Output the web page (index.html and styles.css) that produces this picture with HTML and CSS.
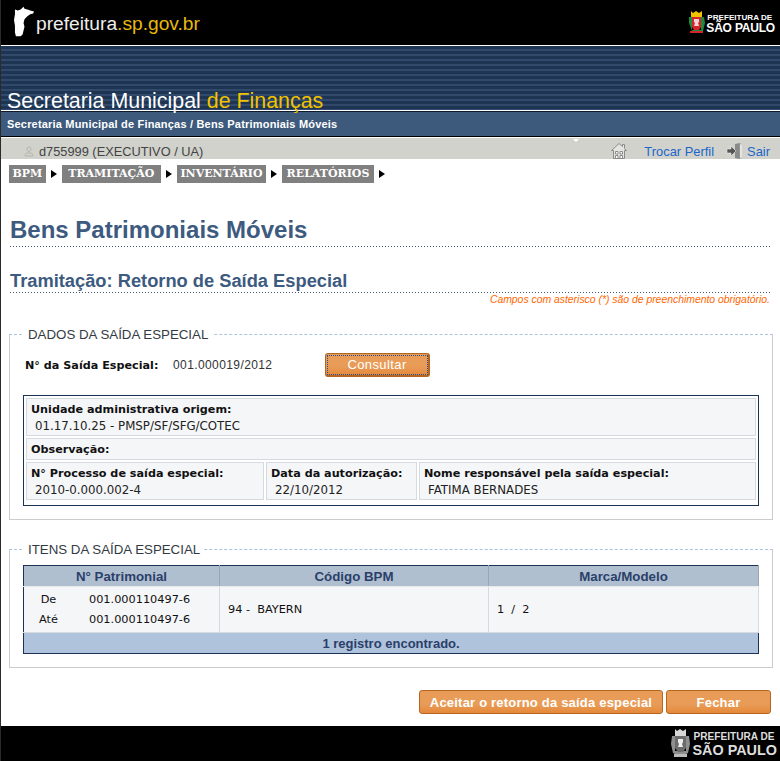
FILE: index.html
```html
<!DOCTYPE html>
<html lang="pt-BR">
<head>
  <meta charset="UTF-8" />
  <title>Bens Patrimoniais Móveis</title>
  <link rel="stylesheet" href="styles.css">
</head>
<body>
  <!-- Top bar -->
  <div class="topbar">
    <div class="portal">
      <svg class="state-map" viewBox="0 0 22 32"><path fill="#fff" d="M1 3l3 1 3-1 3-3 1 2 3 1 3 1 4 1-1 2-3 1-3 2-3 3-1 4 1 4-1 4-1 4-2 2-5 0-1-4 0-7-1-6 1-6z"/></svg>
      <span class="portal-name">prefeitura<em>.sp.gov.br</em></span>
    </div>
    <div class="city-logo">
      <svg class="crest" viewBox="0 0 17 23">
        <path fill="#f2c200" d="M3 0l2 2 3-2 3 2 3-2 0 6-11 0z"/>
        <path fill="#1c8a3c" d="M1 6l3 0 0 13 9 0 0-13 3 0 1 6-2 8-3 2-5 0-3-2-3-8z"/>
        <path fill="#d8232a" d="M4 6l9 0 0 10-2 3-5 0-2-3z"/>
        <path fill="#f4d6d6" d="M6 8l5 0 0 3-1 1 1 3-5 0 1-3-1-1z"/>
        <path fill="#d8232a" d="M2 20l13 0 0 2-13 0z"/>
      </svg>
      <div class="city-name"><span>PREFEITURA DE</span><strong>SÃO PAULO</strong></div>
    </div>
  </div>

  <div class="banner"><h2>Secretaria Municipal <span>de Finanças</span></h2></div>
  <div class="crumbs">Secretaria Municipal de Finanças / Bens Patrimoniais Móveis</div>

  <div class="userbar">
    <div class="user">
      <svg class="user-icon" viewBox="0 0 10 11"><path fill="none" stroke="#b5b5b0" d="M5 1c1.500 0 2 1 2 2s-.5 2.500-2 2.500S3 4 3 3s.5-2 2-2zM1 10c0-2 1.500-3 2.500-3h3C7.500 7 9 8 9 10z"/></svg>
      d755999 (EXECUTIVO / UA)
    </div>
    <div class="user-links">
      <svg class="home-icon" viewBox="0 0 16 16"><path fill="#e4e4e0" stroke="#8b8b8b" d="M2.500 15.500v-8l-2 0L8 .5l3.500 3V1.500h2v4l2 2h-2v8z"/><path fill="#fff" stroke="#8b8b8b" d="M4.500 8.500h2.500v2.500H4.500zM9 8.500h2.500v2.500H9zM4.500 12.500h2.500v3H4.500zM9 12.500h2.500v3H9z"/></svg>
      <a href="#" class="link-perfil">Trocar Perfil</a>
      <svg class="exit-icon" viewBox="0 0 16 16"><path fill="#8a8a8a" d="M9 1l5-1v16l-5-1z"/><path fill="#fff" stroke="#aaa" stroke-width=".6" d="M14 1h2v14h-2z"/><path fill="#555" stroke="#fff" stroke-width=".5" d="M1 6h4V3l5 5-5 5v-3H1z"/></svg>
      <a href="#">Sair</a>
    </div>
  </div>

  <nav class="menu">
    <a href="#" class="menu-tight">BPM</a><i></i>
    <a href="#" class="menu-wide">TRAMITAÇÃO</a><i></i>
    <a href="#" class="menu-tight">INVENTÁRIO</a><i></i>
    <a href="#">RELATÓRIOS</a><i></i>
  </nav>

  <div class="content">
    <h1 class="page-title">Bens Patrimoniais Móveis</h1>
    <h3 class="sub-title">Tramitação: Retorno de Saída Especial</h3>
    <p class="required-note">Campos com asterisco (*) são de preenchimento obrigatório.</p>

    <fieldset class="box box-dados">
      <legend>DADOS DA SAÍDA ESPECIAL</legend>
      <div class="search-row">
        <label>N° da Saída Especial:</label>
        <span class="search-value">001.000019/2012</span>
        <button class="btn btn-consultar">Consultar</button>
      </div>
      <div class="info-panel">
        <div class="info-cell span-all">
          <b>Unidade administrativa origem:</b>
          <span>01.17.10.25 - PMSP/SF/SFG/COTEC</span>
        </div>
        <div class="info-cell span-all"><b>Observação:</b></div>
        <div class="info-cell">
          <b>N° Processo de saída especial:</b>
          <span>2010-0.000.002-4</span>
        </div>
        <div class="info-cell">
          <b>Data da autorização:</b>
          <span>22/10/2012</span>
        </div>
        <div class="info-cell">
          <b>Nome responsável pela saída especial:</b>
          <span>FATIMA BERNADES</span>
        </div>
      </div>
    </fieldset>

    <fieldset class="box box-itens">
      <legend>ITENS DA SAÍDA ESPECIAL</legend>
      <table class="grid">
        <thead>
          <tr>
            <th class="col-patr">N° Patrimonial</th>
            <th class="col-bpm">Código BPM</th>
            <th>Marca/Modelo</th>
          </tr>
        </thead>
        <tbody>
          <tr>
            <td>
              <div class="range"><span>De</span><span>001.000110497-6</span></div>
              <div class="range"><span>Até</span><span>001.000110497-6</span></div>
            </td>
            <td>94 -&nbsp; BAYERN</td>
            <td>1 &nbsp;/&nbsp; 2</td>
          </tr>
        </tbody>
        <tfoot>
          <tr><td colspan="3">1 registro encontrado.</td></tr>
        </tfoot>
      </table>
    </fieldset>

    <div class="actions">
      <button class="btn btn-aceitar">Aceitar o retorno da saída especial</button>
      <button class="btn btn-fechar">Fechar</button>
    </div>
  </div>

  <div class="footer">
    <svg class="crest-foot" viewBox="0 0 19 28">
      <path fill="#d8d8d8" d="M4 0l2 2 3-2 3 2 3-2 0 7-11 0z"/>
      <path fill="#8f8f8f" d="M1 7l3 0 0 15 11 0 0-15 3 0 1 8-2 9-4 2-7 0-4-2-2-9z"/>
      <path fill="#6c6c6c" d="M4 7l11 0 0 12-3 4-5 0-3-4z"/>
      <path fill="#eee" d="M7 10l5 0 0 3-1 2 1 3-5 0 1-3-1-2z"/>
      <path fill="#bbb" d="M3 25l13 0 0 3-13 0z"/>
    </svg>
    <div class="foot-name"><span>PREFEITURA DE</span><strong>SÃO PAULO</strong></div>
  </div>
</body>
</html>
```

FILE: styles.css
```css
body {
  margin: 0;
  background: #fff;
  color: #111;
  font-family: "Liberation Sans", Arial, sans-serif;
  border-left: 1px solid #2b2b2b;
}

/* header */
.topbar {
  height: 45px;
  margin-left: -1px;
  background: #000;
  display: flex;
  justify-content: space-between;
  align-items: flex-start;
}

.portal {
  display: flex;
  padding: 6px 0 0 14px;
}

.state-map {
  width: 21px;
  height: 32px;
}

.portal-name {
  margin: 6px 0 0 1px;
  color: #eee;
  font-size: 19.200px;
  line-height: 24px;
}

.portal-name em {
  color: #e8b90c;
  font-style: normal;
}

.city-logo {
  display: flex;
  padding: 11px 5px 0 0;
  gap: 1px;
}

.crest {
  width: 17px;
  height: 23px;
}

.city-name {
  display: flex;
  flex-direction: column;
  align-items: flex-start;
  color: #fff;
  font-weight: bold;
}

.city-name span {
  font-size: 8.100px;
  line-height: 9px;
  margin: 2px 0 0 1px;
}

.city-name strong {
  font-size: 12px;
  letter-spacing: -.2px;
  line-height: 13px;
}

.banner {
  height: 64px;
  margin-top: 1px;
  background: repeating-linear-gradient(#1d3453 0, #1d3453 3px, #314a6c 3px, #314a6c 5px);
  display: flex;
  align-items: flex-end;
  box-sizing: border-box;
  padding-left: 6px;
}

.banner h2 {
  margin: 0 0 -2px;
  color: #fff;
  font-size: 21.400px;
  font-weight: normal;
  line-height: 22px;
}

.banner h2 span {
  color: #f2c200;
}

.crumbs {
  height: 24px;
  margin-top: 1px;
  border-top: 1px solid #0c1a2c;
  border-bottom: 1px solid #000;
  background: #3d5a7c;
  color: #fff;
  font-size: 11px;
  font-weight: bold;
  letter-spacing: .19px;
  line-height: 25px;
  padding-left: 6px;
}

.userbar {
  position: relative;
  height: 21px;
  margin-top: 1px;
  background: #d1d2cc;
  display: flex;
  justify-content: space-between;
  align-items: center;
  box-sizing: border-box;
  color: #444;
  font-size: 12.800px;
  padding: 5px 10px 0 23px;
}

/* little notch under the white line */
.userbar::after {
  content: "";
  position: absolute;
  left: 572px;
  top: 1px;
  border-top: 3px solid #fff;
  border-left: 3px solid transparent;
  border-right: 3px solid transparent;
}

.user {
  display: flex;
  align-items: center;
  gap: 5px;
}

.user-icon {
  width: 10px;
  height: 11px;
}

.user-links {
  display: flex;
  align-items: center;
  font-size: 12.900px;
}

.user-links a {
  color: #1b66c9;
  text-decoration: none;
}

.home-icon {
  width: 16px;
  height: 16px;
  margin: 0 17px 0 0;
}

.exit-icon {
  width: 16px;
  height: 16px;
  margin: 0 5px 0 12px;
}

/* menu */
.menu {
  display: flex;
  align-items: center;
  padding: 6px 0 0 8px;
}

.menu a {
  background: #808080;
  color: #fff;
  font-family: "DejaVu Serif", Georgia, serif;
  font-size: 11px;
  font-weight: bold;
  line-height: 18px;
  padding: 0 4.500px;
  text-decoration: none;
}

.menu a.menu-wide {
  padding: 0 6.500px;
}

.menu a.menu-tight {
  padding: 0 3.500px;
}

.menu i {
  width: 0;
  height: 0;
  border-left: 6px solid #000;
  border-top: 4px solid transparent;
  border-bottom: 4px solid transparent;
  margin: 0 5px;
}

/* content */
.content {
  padding: 0 7px 0 8px;
}

.page-title,
.sub-title {
  color: #3d5a7f;
  padding-bottom: 1px;
  background: repeating-linear-gradient(to right, #3d5a7f 0, #3d5a7f 1px, transparent 1px, transparent 3px) left bottom / 100% 1px no-repeat;
}

.page-title {
  margin: 30px 2px 0 1px;
  font-size: 24px;
  line-height: 33px;
}

.sub-title {
  margin: 23px 2px 0 1px;
  font-size: 18.300px;
  line-height: 22px;
}

.required-note {
  margin: 1px 3px 0 0;
  color: #f60;
  font-size: 10.400px;
  font-style: italic;
  line-height: 12px;
  text-align: right;
}

.box {
  margin: 0;
  padding: 0 13px;
  border: 1px solid #ccc;
  border-top: 1px dashed #a9c3e0;
  min-width: 0;
}

.box legend {
  margin-left: 0;
  padding: 2px 4px 0 5px;
  color: #333a44;
  font-size: 13.300px;
  line-height: 16px;
}

.box-dados {
  margin-top: 19px;
  height: 195px;
  box-sizing: border-box;
}

.box-itens {
  margin-top: 20px;
  height: 128px;
  box-sizing: border-box;
}

.search-row {
  display: flex;
  align-items: center;
  height: 24px;
  margin-top: 10px;
  padding-left: 2px;
}

.search-row label {
  font-family: "DejaVu Sans", Verdana, sans-serif;
  font-size: 11.200px;
  font-weight: bold;
  width: 148px;
}

.search-value {
  font-size: 12px;
  letter-spacing: .4px;
  color: #333;
  width: 152px;
}

.btn {
  color: #fff;
  font-family: "Liberation Sans", Arial, sans-serif;
  font-size: 13px;
  font-weight: bold;
  letter-spacing: .2px;
  background: linear-gradient(#e89c58, #e89c58 60%, #e5893a);
  border: 1px solid #b5651d;
  border-radius: 3px;
  padding: 0;
  height: 24px;
}

.btn-consultar {
  width: 105px;
  border-width: 1px 2px 2px 1px;
  font-weight: normal;
  letter-spacing: .4px;
  outline: 1px dotted #1c4f9c;
  outline-offset: -3px;
}

.info-panel {
  display: grid;
  grid-template-columns: 238px 151px 337px;
  gap: 2px;
  margin-top: 18px;
  padding: 2px 2px 5px;
  border: 1px solid #1c3355;
  font-family: "DejaVu Sans", Verdana, sans-serif;
  font-size: 11.800px;
}

.info-cell {
  background: #f5f6f8;
  border: 1px solid #d5dade;
  padding: 3px 4px 1px;
  line-height: 16px;
  min-height: 16px;
}

.span-all {
  grid-column: 1 / -1;
}

.info-cell b {
  display: block;
  font-size: 11.200px;
}

.info-cell span {
  display: block;
  padding-left: 4px;
  color: #222;
}

/* items table */
.grid {
  width: 736px;
  margin-top: 7px;
  border-collapse: collapse;
  border: 1px solid #1c3355;
  font-size: 12px;
  table-layout: fixed;
}

.grid th {
  height: 20px;
  padding: 0;
  background: #afbfd0;
  color: #2b3f6a;
  font-size: 13.300px;
  border-right: 1px solid #9aa6b2;
  border-bottom: 1px solid #e6e8ea;
}

.col-patr {
  width: 195px;
}

.col-bpm {
  width: 268px;
}

.grid tbody td {
  height: 45px;
  padding: 0 8px;
  background: #f5f6f8;
  font-family: "DejaVu Sans", Verdana, sans-serif;
  font-size: 11.300px;
  border-right: 1px solid #d5dade;
  border-bottom: 1px solid #d5dade;
}

.range {
  display: flex;
  line-height: 20px;
}

.range span:first-child {
  width: 49px;
  text-align: center;
  margin-right: 16px;
  margin-left: -8px;
}

.grid tfoot td {
  height: 20px;
  padding: 0;
  background: #afc3dc;
  color: #2b3f6a;
  font-size: 13px;
  font-weight: bold;
  text-align: center;
}

.actions {
  display: flex;
  justify-content: flex-end;
  gap: 3px;
  margin: 22px 2px 0 0;
}

.btn-aceitar {
  width: 244px;
}

.btn-fechar {
  width: 105px;
}

.footer {
  height: 35px;
  margin: 12px 0 0 -1px;
  background: #000;
  display: flex;
  justify-content: flex-end;
  padding: 3px 3px 0 0;
  box-sizing: border-box;
  gap: 3px;
}

.crest-foot {
  width: 19px;
  height: 28px;
}

.foot-name {
  display: flex;
  flex-direction: column;
  color: #ddd;
  font-weight: bold;
}

.foot-name span {
  font-size: 10.100px;
  line-height: 10px;
  margin: 3px 0 1px 1px;
}

.foot-name strong {
  font-size: 14.400px;
  line-height: 15px;
}
```
